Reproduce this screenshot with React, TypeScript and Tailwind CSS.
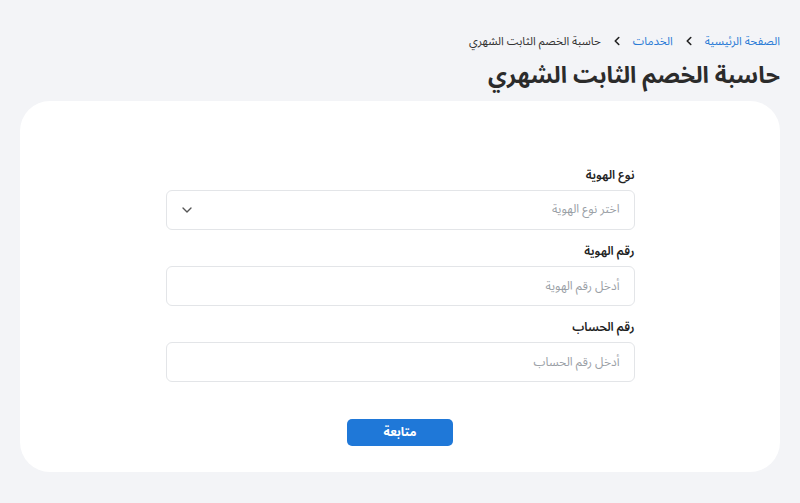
import { ChevronDown } from "lucide-react";

const fields = [
  { id: "idNumber", label: "رقم الهوية", placeholder: "أدخل رقم الهوية" },
  { id: "account", label: "رقم الحساب", placeholder: "أدخل رقم الحساب" },
];

function Chevron() {
  return (
    <svg viewBox="0 0 24 24" className="h-[14px] w-[14px] text-[#222]" fill="none" stroke="currentColor" strokeWidth={2.8} strokeLinecap="round" strokeLinejoin="round">
      <polyline points="15 18 9 12 15 6" />
    </svg>
  );
}

export default function App() {
  return (
    <div
      dir="rtl"
      className="min-h-[503px] bg-[#f3f4f7] px-5 pt-[31px] pb-8 text-[#1f2328]"
      style={{ fontFamily: '"Noto Sans Arabic", "Noto Sans", "DejaVu Sans", sans-serif' }}
    >
      <nav className="flex items-center gap-[9px] text-[11.5px] leading-5">
        <a className="text-[#2a7bd6]">الصفحة الرئيسية</a>
        <Chevron />
        <a className="text-[#2a7bd6]">الخدمات</a>
        <Chevron />
        <span className="text-[#333]">حاسبة الخصم الثابت الشهري</span>
      </nav>
      <h1 className="mt-[5px] text-[23px] font-bold leading-[40px] text-[#2b2b2b]">
        حاسبة الخصم الثابت الشهري
      </h1>

      <div className="mt-[5px] rounded-[30px] bg-white px-6 pt-[65px] pb-[26px]">
        <form className="mx-auto flex w-[469px] flex-col">
          <label className="mb-[4px] text-[12px] font-semibold leading-5 text-[#222]">
            نوع الهوية
          </label>
          <div className="flex h-10 items-center justify-between rounded-md border border-[#e3e5e8] bg-white pr-[14px] pl-3">
            <span className="text-[12px] text-[#9aa0a6]">اختر نوع الهوية</span>
            <ChevronDown className="h-4 w-4 text-[#555]" strokeWidth={2} />
          </div>

          {fields.map((f) => (
            <div key={f.id} className="mt-[12px] flex flex-col">
              <label className="mb-[4px] text-[12px] font-semibold leading-5 text-[#222]">
                {f.label}
              </label>
              <input
                placeholder={f.placeholder}
                className="h-10 rounded-md border border-[#e3e5e8] bg-white pr-[14px] text-[12px] outline-none placeholder:text-[#9aa0a6]"
              />
            </div>
          ))}

          <button
            type="button"
            className="mx-auto mt-[37px] h-[27px] w-[106px] rounded-[5px] bg-[#1f78d8] text-[12px] font-bold text-white"
          >
            متابعة
          </button>
        </form>
      </div>
    </div>
  );
}
